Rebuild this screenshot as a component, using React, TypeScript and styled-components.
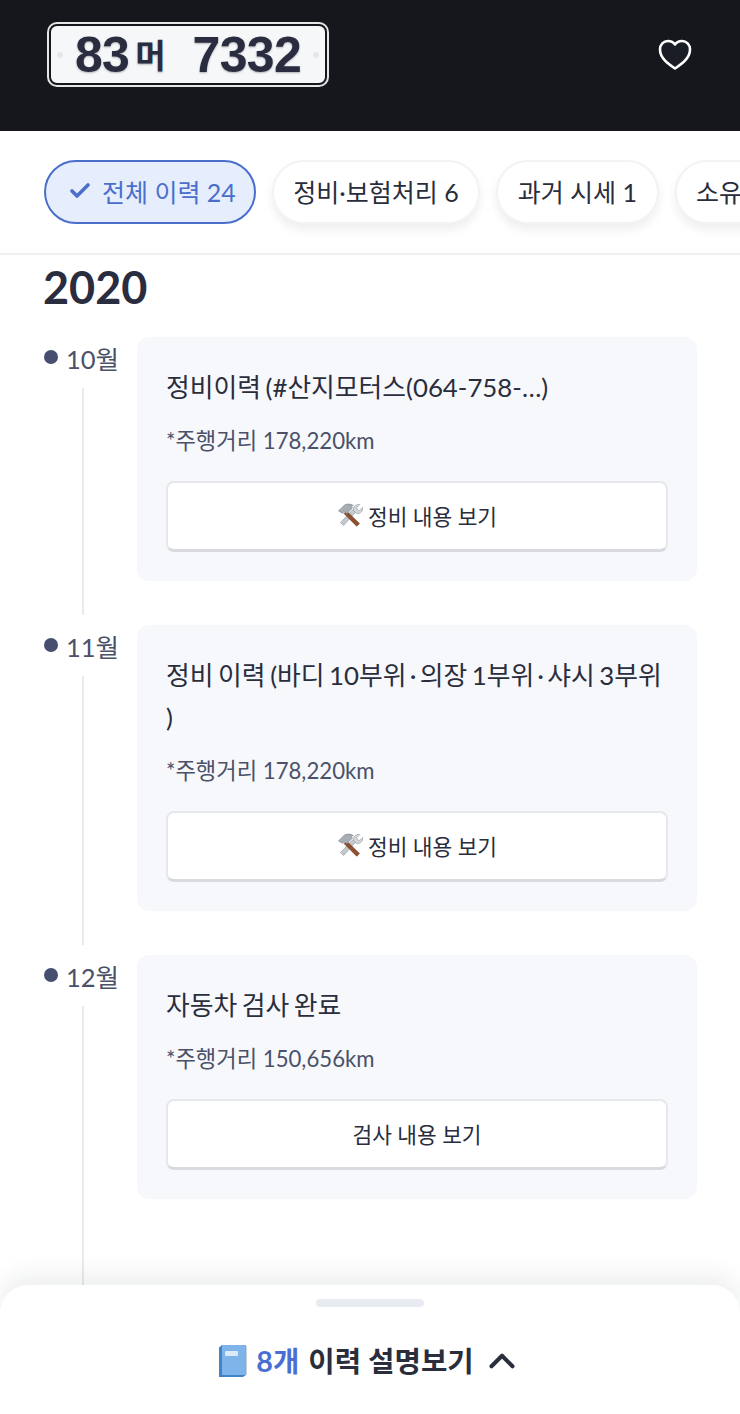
import { createGlobalStyle, styled } from 'styled-components';
import { Check, ChevronUp } from 'lucide-react';

type Chip = { label: string; active?: boolean };

type HistoryItem = {
  month: string;
  title: string;
  distance: string;
  button: string;
  tools?: boolean;
};

const CHIPS: Chip[] = [
  { label: '전체 이력 24', active: true },
  { label: '정비·보험처리 6' },
  { label: '과거 시세 1' },
  { label: '소유자 변경 3' },
];

const ITEMS: HistoryItem[] = [
  {
    month: '10월',
    title: '정비이력 (#산지모터스(064-758-…)',
    distance: '*주행거리 178,220km',
    button: '정비 내용 보기',
    tools: true,
  },
  {
    month: '11월',
    title: '정비 이력 (바디 10부위\u200a\u200a·\u200a\u200a의장 1부위\u200a\u200a·\u200a\u200a샤시 3부위 )',
    distance: '*주행거리 178,220km',
    button: '정비 내용 보기',
    tools: true,
  },
  {
    month: '12월',
    title: '자동차 검사 완료',
    distance: '*주행거리 150,656km',
    button: '검사 내용 보기',
  },
];

const ToolsIcon = () => (
  <SToolsSvg viewBox="0 0 26 26">
    <path d="M3.500 20.500 16 7.500l2.800 2.600L6.500 23.500z" fill="#c4c9cf" stroke="#8f969e" strokeWidth="0.6" />
    <path
      d="M16.500 8.500C15.800 5 18.800 1.800 22.800 2.500l-3 3 .6 2.300 2.300.6 3-3c.6 3.800-2.700 6.800-6.200 6z"
      fill="#d3d7db"
      stroke="#8f969e"
      strokeWidth="0.6"
    />
    <path d="M9.500 9 22.500 21.500l-2.800 2.800L7 11.500z" fill="#8f4f2c" stroke="#5f3118" strokeWidth="0.5" />
    <path
      d="M1.500 9 7.500 3c3-1.500 6.500-1.200 8.800.6l-2.600.3L15.500 6l-5.800 5.800-2.300-2.300-2 1.700z"
      fill="#a6adb4"
      stroke="#767d85"
      strokeWidth="0.6"
    />
  </SToolsSvg>
);

const BookIcon = () => (
  <SBookSvg viewBox="0 0 30 34">
    <path d="M2 3.500 5 1h24v30l-3 2H2z" fill="#3f83c9" />
    <rect x="5" y="1" width="24" height="30" rx="1" fill="#7fb4ea" />
    <rect x="28" y="2" width="1.500" height="29" fill="#9aa7b2" />
    <rect x="8" y="7" width="13" height="5" rx="1" fill="#dce9f6" />
  </SBookSvg>
);

const App = () => {
  return (
    <SPage>
      <GlobalStyle />
      <SHeader>
        <SPlate>
          <SBolt />
          <SPlateNumber>
            83<SPlateHangul>머</SPlateHangul>
          </SPlateNumber>
          <SPlateNumber>7332</SPlateNumber>
          <SBolt />
        </SPlate>
        <SHeartSvg viewBox="0 0 34 32">
          <path
            d="M17 29.500C11 25.500 2 19.500 2 10.500 2 5.500 5.500 2 10 2c3 0 5.500 1.300 7 3.500C18.500 3.300 21 2 24 2c4.500 0 8 3.500 8 8.500 0 9-9 15-15 19z"
            fill="#1a1d26"
            stroke="#fff"
            strokeWidth="2.600"
            strokeLinejoin="round"
          />
        </SHeartSvg>
      </SHeader>

      <SChipBar>
        {CHIPS.map(chip => (
          <SChip key={chip.label} $active={chip.active}>
            {chip.active && <Check size={24} strokeWidth={3.6} />}
            {chip.label}
          </SChip>
        ))}
      </SChipBar>

      <SYear>2020</SYear>

      <STimeline>
        {ITEMS.map(item => (
          <SRow key={item.month}>
            <SMonthColumn>
              <SMonth>
                <SDot />
                {item.month}
              </SMonth>
              <SLine />
            </SMonthColumn>
            <SCard>
              <STitle>{item.title}</STitle>
              <SDistance>{item.distance}</SDistance>
              <SButton type="button">
                {item.tools && <ToolsIcon />}
                {item.button}
              </SButton>
            </SCard>
          </SRow>
        ))}
      </STimeline>

      <SSheet>
        <SHandle />
        <SSheetLabel>
          <BookIcon />
          <SSheetCount>8개</SSheetCount>
          <span>이력 설명보기</span>
          <SChevron size={42} strokeWidth={2.3} />
        </SSheetLabel>
      </SSheet>
    </SPage>
  );
};

const GlobalStyle = createGlobalStyle`
  html,
  body {
    margin: 0;
    padding: 0;
    background: #fff;
  }

  * {
    box-sizing: border-box;
  }

  body {
    font-family: Lato, 'Noto Sans CJK KR', sans-serif;
    color: #2a2d3c;
  }
`;

const SPage = styled.div`
  position: relative;
  width: 740px;
  height: 1414px;
  overflow: hidden;
  background: #fff;
`;

const SHeader = styled.header`
  height: 131px;
  padding: 24px 48px 0 49px;
  display: flex;
  justify-content: space-between;
  align-items: flex-start;
  background: #15171c;
`;

const SPlate = styled.div`
  width: 278px;
  height: 61px;
  padding: 0 6px;
  display: flex;
  align-items: center;
  gap: 12px;
  background: #f6f7f9;
  border: 2px solid #15171c;
  border-radius: 8px;
  box-shadow: 0 0 0 2px #e6e6e6;
`;

const SBolt = styled.span`
  width: 8px;
  height: 6px;
  border-radius: 50%;
  background: #e6e7ea;
`;

const SPlateNumber = styled.span`
  font-family: 'Liberation Sans', Arial, 'Noto Sans CJK KR', sans-serif;
  font-size: 50px;
  font-weight: 700;
  line-height: 60px;
  letter-spacing: -0.7px;
  white-space: nowrap;
  color: #2a2d3f;
  text-shadow: 0 1px 2px rgba(40, 44, 60, 0.35);

  & + & {
    margin-left: 15px;
  }
`;

const SPlateHangul = styled.span`
  margin-left: 6px;
  font-family: 'Noto Sans CJK KR', sans-serif;
  font-size: 33px;
  font-weight: 700;
  letter-spacing: 0;
  vertical-align: 4px;
`;

const SHeartSvg = styled.svg`
  width: 34px;
  height: 32px;
  margin-top: 15px;
`;

const SChipBar = styled.nav`
  height: 124px;
  padding: 29px 0 0 44px;
  display: flex;
  align-items: flex-start;
  gap: 16px;
  overflow: hidden;
  border-bottom: 2px solid #eeeff2;
`;

const SChip = styled.div<{ $active?: boolean }>`
  flex-shrink: 0;
  height: 64px;
  padding: 0 ${props => (props.$active ? '18px 2px 22px' : '19.5px 2px')};
  display: flex;
  align-items: center;
  gap: 10px;
  font-size: 25px;
  white-space: nowrap;
  border-radius: 32px;
  color: ${props => (props.$active ? '#4a6fcb' : '#2a2d3c')};
  background: ${props => (props.$active ? '#e6edfc' : '#fff')};
  border: ${props => (props.$active ? '2px solid #4a6fcb' : '2px solid #f3f3f5')};
  box-shadow: ${props => (props.$active ? 'none' : '0 6px 10px rgba(30, 35, 50, 0.07)')};
`;

const SYear = styled.h2`
  margin: 7px 0 0 43px;
  font-size: 45px;
  font-weight: 700;
  line-height: 50px;
  color: #2a2d3f;
`;

const STimeline = styled.div`
  margin-top: 25px;
  padding: 0 43px 0 44px;
`;

const SMonthColumn = styled.div`
  flex: 0 0 93px;
  padding-top: 5px;
  display: flex;
  flex-direction: column;
`;

const SMonth = styled.div`
  height: 32px;
  padding-bottom: 2px;
  display: flex;
  align-items: center;
  gap: 8px;
  font-size: 25.5px;
  color: #4a5168;
`;

const SDot = styled.span`
  width: 14px;
  height: 14px;
  border-radius: 50%;
  background: #464f70;
`;

const SLine = styled.div`
  flex: 1;
  width: 2px;
  margin: 14px 0 -34px 38px;
  background: #e9eaee;
`;

const SRow = styled.section`
  display: flex;
  padding-bottom: 44px;

  &:last-child ${SLine} {
    margin-bottom: -110px;
  }
`;

const SCard = styled.article`
  flex: 1;
  padding: 29px;
  background: #f6f8fc;
  border-radius: 12px;
`;

const STitle = styled.div`
  font-size: 25.8px;
  line-height: 42px;
  word-spacing: -2px;
  word-break: keep-all;
  color: #2a2d3c;
`;

const SDistance = styled.div`
  margin-top: 16px;
  font-size: 22.2px;
  line-height: 34px;
  color: #4a5168;
`;

const SButton = styled.button`
  width: 100%;
  height: 71px;
  margin-top: 23px;
  padding: 0 0 2px;
  display: flex;
  align-items: center;
  justify-content: center;
  gap: 5px;
  font-family: inherit;
  font-size: 21.4px;
  color: #2a2d3c;
  background: #fff;
  border: 2px solid #e6e8ed;
  border-bottom: 3px solid #d8dae0;
  border-radius: 8px;
`;

const SToolsSvg = styled.svg`
  width: 26px;
  height: 26px;
`;

const SSheet = styled.div`
  position: absolute;
  left: 0;
  right: 0;
  bottom: 0;
  height: 129px;
  padding-top: 14px;
  display: flex;
  flex-direction: column;
  align-items: center;
  background: #fff;
  border-radius: 28px 28px 0 0;
  box-shadow: 0 -10px 24px rgba(30, 35, 50, 0.08);
`;

const SHandle = styled.div`
  width: 108px;
  height: 8px;
  border-radius: 4px;
  background: #e9ebf2;
`;

const SSheetLabel = styled.div`
  margin-top: 33px;
  display: flex;
  align-items: center;
  gap: 9px;
  font-size: 28.7px;
  font-weight: 700;
  line-height: 40px;
  color: #2a2d3c;
`;

const SBookSvg = styled.svg`
  width: 30px;
  height: 34px;
`;

const SSheetCount = styled.span`
  color: #4a6fd4;
`;

const SChevron = styled(ChevronUp)`
  margin-left: -2px;
`;

export default App;
